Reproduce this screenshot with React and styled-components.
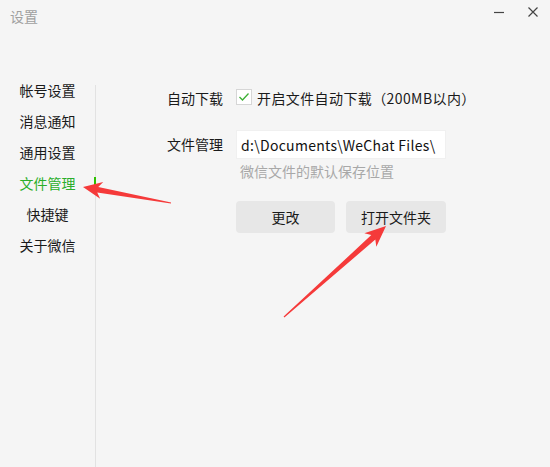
import React from "react";
import styled, { createGlobalStyle } from "styled-components";

const Global = createGlobalStyle`
  html, body { margin: 0; padding: 0; background: #f5f5f5; }
  * { box-sizing: border-box; }
`;

const Window = styled.div`
  position: relative;
  width: 550px;
  height: 467px;
  background: #f5f5f5;
  font-family: "Noto Sans CJK SC", "Microsoft YaHei", sans-serif;
  font-size: 14px;
  color: #1a1a1a;
  display: flex;
  flex-direction: column;
  overflow: hidden;
`;

const TitleBar = styled.div`
  height: 40px;
  display: flex;
  align-items: flex-start;
  justify-content: space-between;
  padding: 6px 0 0 10px;
`;

const Title = styled.div`
  font-size: 14px;
  line-height: 20px;
  color: #a0a0a0;
`;

const Controls = styled.div`
  display: flex;
  margin-top: -6px;
`;

const CtrlButton = styled.div`
  width: 34px;
  height: 24px;
  display: flex;
  align-items: center;
  justify-content: center;
  color: #444;
`;

const Body = styled.div`
  flex: 1;
  display: flex;
`;

const Sidebar = styled.nav`
  width: 95px;
  padding-top: 35px;
  display: flex;
  flex-direction: column;
`;

const NavItem = styled.div`
  height: 31px;
  line-height: 31px;
  text-align: center;
  font-size: 14px;
  color: ${(p) => (p.$active ? "#2aae2a" : "#1a1a1a")};
`;

const Divider = styled.div`
  position: relative;
  width: 1px;
  margin-top: 45px;
  background: #e2e2e2;
`;

const ActiveMark = styled.div`
  position: absolute;
  left: -1px;
  top: 92px;
  width: 2px;
  height: 8px;
  background: #2dc100;
`;

const Main = styled.div`
  flex: 1;
  padding: 48px 0 0 71px;
  display: flex;
  flex-direction: column;
`;

const Row = styled.div`
  display: flex;
  align-items: center;
  min-height: ${(p) => p.$h || 20}px;
  margin-top: ${(p) => p.$mt || 0}px;
`;

const Label = styled.div`
  width: 69px;
  font-size: 14px;
  color: #1a1a1a;
  white-space: nowrap;
  margin-top: ${(p) => p.$dy || 0}px;
`;

const CheckBox = styled.div`
  width: 16px;
  height: 16px;
  background: #fff;
  border: 1px solid #d6d6d6;
  display: flex;
  align-items: center;
  justify-content: center;
  margin-right: 5px;
  margin-top: -2px;
`;

const CheckText = styled.div`
  font-size: 14px;
  letter-spacing: 0.4px;
  white-space: nowrap;
`;

const PathInput = styled.div`
  width: 210px;
  height: 29px;
  background: #fff;
  border: 1px solid #f0f0f0;
  padding-left: 4px;
  display: flex;
  align-items: center;
  font-size: 14px;
  letter-spacing: 0.3px;
  color: #111;
  white-space: nowrap;
  overflow: hidden;
`;

const Hint = styled.div`
  margin-left: 71px;
  padding-left: 2px;
  line-height: 24px;
  font-size: 14px;
  color: #a8a8a8;
`;

const Buttons = styled.div`
  display: flex;
  gap: 11px;
  margin: 18px 0 0 69px;
`;

const Button = styled.div`
  width: ${(p) => p.$w}px;
  height: 32px;
  border-radius: 4px;
  background: #e7e7e7;
  display: flex;
  align-items: center;
  justify-content: center;
  font-size: 14px;
  color: #1a1a1a;
`;

const Overlay = styled.svg`
  position: absolute;
  left: 0;
  top: 0;
  pointer-events: none;
`;

function Arrow({ x1, y1, x2, y2, head = 18, hw = 9, sw = 3.2 }) {
  const dx = x2 - x1;
  const dy = y2 - y1;
  const L = Math.sqrt(dx * dx + dy * dy);
  const ang = (Math.atan2(dy, dx) * 180) / Math.PI;
  const b = L - head;
  const pts = [
    [0, -0.6],
    [b + 2, -sw],
    [b - 2, -hw],
    [L, 0],
    [b - 2, hw],
    [b + 2, sw],
    [0, 0.6],
  ]
    .map((p) => p.join(","))
    .join(" ");
  return (
    <g transform={`translate(${x1},${y1}) rotate(${ang})`}>
      <polygon points={pts} fill="#f53a3a" />
    </g>
  );
}

const navItems = ["帐号设置", "消息通知", "通用设置", "文件管理", "快捷键", "关于微信"];

export default function App() {
  return (
    <>
      <Global />
      <Window>
        <TitleBar>
          <Title>设置</Title>
          <Controls>
            <CtrlButton>
              <svg width="10" height="10" viewBox="0 0 10 10">
                <line x1="0" y1="5.5" x2="10" y2="5.5" stroke="#444" strokeWidth="1.2" />
              </svg>
            </CtrlButton>
            <CtrlButton>
              <svg width="10" height="10" viewBox="0 0 10 10">
                <path d="M0.5 0.5 L9.5 9.5 M9.5 0.5 L0.5 9.5" stroke="#444" strokeWidth="1.2" />
              </svg>
            </CtrlButton>
          </Controls>
        </TitleBar>
        <Body>
          <Sidebar>
            {navItems.map((n) => (
              <NavItem key={n} $active={n === "文件管理"}>
                {n}
              </NavItem>
            ))}
          </Sidebar>
          <Divider>
            <ActiveMark />
          </Divider>
          <Main>
            <Row $h={20}>
              <Label>自动下载</Label>
              <CheckBox>
                <svg width="12" height="10" viewBox="0 0 12 10">
                  <path d="M1.5 5 L4.5 8 L10.5 1.5" fill="none" stroke="#3cb034" strokeWidth="1.3" />
                </svg>
              </CheckBox>
              <CheckText>开启文件自动下载（200MB以内）</CheckText>
            </Row>
            <Row $h={29} $mt={22}>
              <Label $dy={-2}>文件管理</Label>
              <PathInput>d:\Documents\WeChat Files\</PathInput>
            </Row>
            <Hint>微信文件的默认保存位置</Hint>
            <Buttons>
              <Button $w={99}>更改</Button>
              <Button $w={100}>打开文件夹</Button>
            </Buttons>
          </Main>
        </Body>
        <Overlay width="550" height="467" viewBox="0 0 550 467">
          <Arrow x1={171} y1={203} x2={83} y2={187} head={17} hw={8.5} sw={2.8} />
          <Arrow x1={284} y1={317} x2={386} y2={226} head={19} hw={9} sw={3} />
        </Overlay>
      </Window>
    </>
  );
}
